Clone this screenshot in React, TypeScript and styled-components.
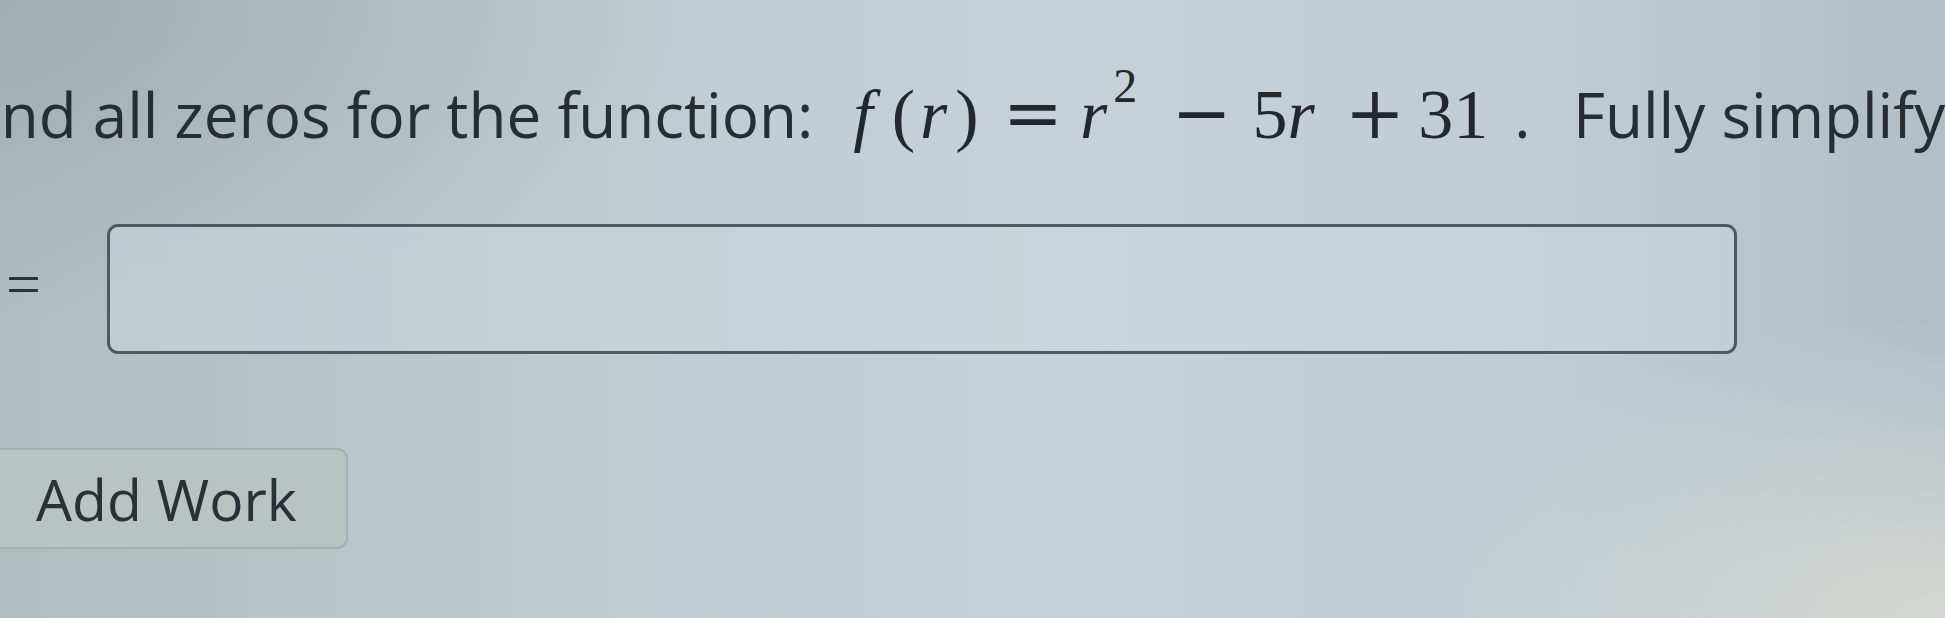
import { FC } from "react";
import styled, { createGlobalStyle } from "styled-components";

const GlobalStyle = createGlobalStyle`
  html, body {
    margin: 0;
    padding: 0;
    width: 1945px;
    height: 618px;
    overflow: hidden;
  }
  body {
    font-family: "Open Sans", Lato, sans-serif;
    color: #262d33;
  }
`;

const App: FC = () => {
  return (
    <>
      <GlobalStyle />
      <Page>
        <Question>
          <Prompt>Find all zeros for the function:</Prompt>
          <MathExpr>
            <Mi $wide>f</Mi>
            <Paren>(</Paren>
            <Mi>r</Mi>
            <Paren>)</Paren>
            <Op $left={19} $right={17}>=</Op>
            <Mi>r</Mi>
            <Sup>2</Sup>
            <Op $left={34} $right={21}>−</Op>
            <Mn>5</Mn>
            <Mi>r</Mi>
            <Op $left={27} $right={13}>+</Op>
            <Mn>31</Mn>
          </MathExpr>
          <Prompt>. &nbsp;&thinsp;Fully simplify your answer.</Prompt>
        </Question>

        <AnswerRow>
          <Equals>=</Equals>
          <AnswerBox type="text" />
        </AnswerRow>

        <AddWork>Add Work</AddWork>
      </Page>
    </>
  );
};

export default App;

// стили
const Page = styled.main`
  width: 1945px;
  height: 618px;
  box-sizing: border-box;
  padding-top: 71px;
  display: flex;
  flex-direction: column;
  background:
    radial-gradient(ellipse 560px 300px at 100% 100%, rgba(222, 222, 212, 0.8), rgba(222, 222, 212, 0) 100%),
    radial-gradient(ellipse 700px 320px at 0% 0%, rgba(150, 160, 166, 0.55), rgba(150, 160, 166, 0) 100%),
    linear-gradient(90deg, #b0bcbf 0%, #bfcbcf 30%, #c6d2d7 55%, #bfccd3 80%, #b1bec8 100%);
`;

const Question = styled.div`
  display: flex;
  align-items: baseline;
  white-space: nowrap;
  margin-left: -47px;
  height: 80px;
`;

const Prompt = styled.span`
  font-size: 62px;
`;

const MathExpr = styled.span`
  display: inline-flex;
  align-items: baseline;
  margin: 0 26px 0 40px;
  font-family: "Liberation Serif", "DejaVu Serif", serif;
  font-size: 70px;
  color: #22282d;
`;

const Mi = styled.span<{ $wide?: boolean }>`
  font-style: italic;
  padding-right: ${({ $wide }) => ($wide ? "14px" : "3px")};
`;

const Mn = styled.span``;

const Paren = styled.span`
  padding: 0 5px;
`;

const Op = styled.span<{ $left: number; $right: number }>`
  font-family: "DejaVu Serif", "Liberation Serif", serif;
  font-size: 72px;
  padding: 0 ${({ $right }) => $right}px 0 ${({ $left }) => $left}px;
`;

const Sup = styled.span`
  font-size: 48px;
  position: relative;
  top: -36px;
  padding-left: 3px;
`;

const AnswerRow = styled.div`
  display: flex;
  align-items: center;
  gap: 66px;
  margin-top: 73px;
  padding-left: 6px;
`;

const Equals = styled.span`
  font-family: "Liberation Serif", "DejaVu Serif", serif;
  font-size: 62px;
  line-height: 1;
  margin-bottom: 10px;
  color: #2b3238;
`;

const AnswerBox = styled.input`
  width: 1630px;
  height: 130px;
  box-sizing: border-box;
  border: 3px solid #4f5960;
  border-radius: 11px;
  background: rgba(204, 215, 221, 0.55);
  outline: none;
`;

const AddWork = styled.button`
  align-self: flex-start;
  margin-top: 94px;
  margin-left: -12px;
  width: 360px;
  height: 101px;
  box-sizing: border-box;
  padding: 0 0 0 46px;
  text-align: left;
  font-family: "Open Sans", Lato, sans-serif;
  font-size: 57px;
  color: #2a3136;
  background: #b9c3c1;
  border: 2px solid #a3aeae;
  border-radius: 11px;
`;
